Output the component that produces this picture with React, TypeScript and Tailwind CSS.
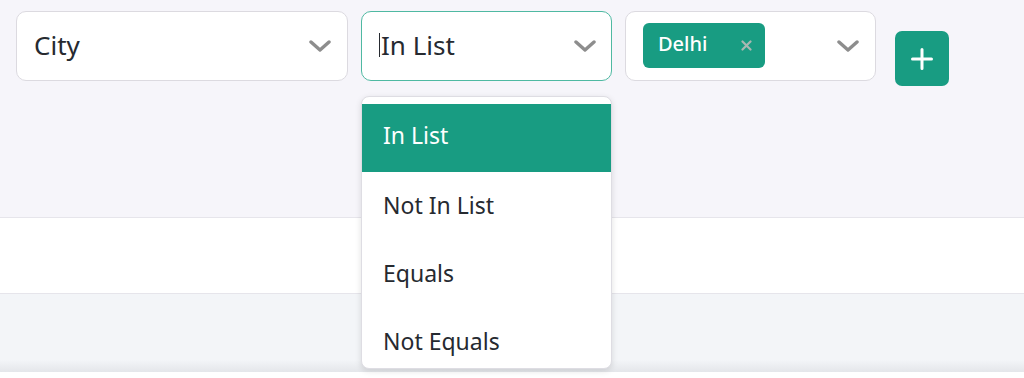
import React from "react";

const Chevron = () => (
  <svg width="22" height="12" viewBox="0 0 22 12" fill="none">
    <path d="M2 2 L11 10 L20 2" stroke="#8d8d8d" strokeWidth="3.4" strokeLinecap="round" strokeLinejoin="round" />
  </svg>
);

export default function App() {
  const font = { fontFamily: '"Noto Sans", "Open Sans", sans-serif' };
  const items = ["In List", "Not In List", "Equals", "Not Equals"];
  return (
    <div className="relative w-[1024px] h-[378px] overflow-hidden bg-white" style={font}>
      <div className="h-[218px] bg-[#f6f5fa] border-b border-[#e6e5eb] pl-[16px] pt-[11px]">
        <div className="flex items-start">
          <div className="w-[332px] h-[70px] bg-white border border-[#dcdae0] rounded-[10px] flex items-center justify-between pl-[17px] pr-[16px]">
            <span className="text-[26px] text-[#262a30] leading-none pb-[2px]">City</span>
            <Chevron />
          </div>
          <div className="ml-[13px] w-[251px] h-[70px] bg-white border border-[#4fb9a2] rounded-[10px] flex items-center justify-between pl-[17px] pr-[15px]">
            <span className="flex items-center text-[26px] text-[#262a30] leading-none pb-[2px]">
              <span className="inline-block w-[1px] h-[24px] bg-[#262a30] mr-[1px]" />
              In List
            </span>
            <Chevron />
          </div>
          <div className="ml-[13px] w-[251px] h-[70px] bg-white border border-[#dcdae0] rounded-[10px] flex items-center justify-between pl-[17px] pr-[16px]">
            <span className="h-[45px] w-[122px] rounded-[6px] bg-[#189c82] flex items-center justify-between pl-[15px] pr-[13px] -mt-[2px]">
              <span className="text-[20px] font-medium text-white leading-none pb-[2px]">Delhi</span>
              <svg width="11" height="11" viewBox="0 0 11 11">
                <path d="M1.5 1.5 L9.5 9.5 M9.5 1.5 L1.5 9.5" stroke="#a9b7b2" strokeWidth="2.2" strokeLinecap="round" />
              </svg>
            </span>
            <Chevron />
          </div>
          <button className="ml-[19px] mt-[20px] w-[54px] h-[55px] rounded-[7px] bg-[#189c82] flex items-center justify-center">
            <svg width="22" height="22" viewBox="0 0 22 22">
              <path d="M11 1.5 V20.5 M1.5 11 H20.5" stroke="white" strokeWidth="3" strokeLinecap="round" />
            </svg>
          </button>
        </div>
      </div>
      <div className="h-[76px] bg-white border-b border-[#e6e5eb]" />
      <div className="h-[78px] bg-[#f3f5f8] flex flex-col justify-end">
        <div className="h-[12px] bg-gradient-to-b from-[#f3f5f8] to-[#e4e6ea]" />
      </div>
      <div className="h-[6px] bg-white" />

      <div className="absolute left-[361px] top-[96px] w-[251px] h-[273px] bg-white border border-[#dedde3] rounded-[8px] shadow-[0_2px_6px_rgba(0,0,0,0.12)] overflow-hidden pt-[7px]">
        {items.map((t, i) => (
          <div
            key={t}
            className={
              i === 0
                ? "h-[68px] bg-[#189c82] text-white flex items-center pl-[21px] pb-[6px] text-[23px]"
                : "h-[68px] text-[#262a30] flex items-center pl-[21px] pb-[2px] text-[23px]"
            }
          >
            {t}
          </div>
        ))}
      </div>
    </div>
  );
}
